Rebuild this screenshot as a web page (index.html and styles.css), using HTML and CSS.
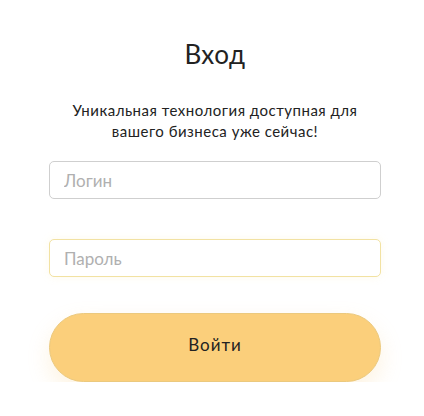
FILE: index.html
```html
<!DOCTYPE html>
<html lang="ru">
<head>
<meta charset="utf-8">
<link rel="stylesheet" href="styles.css">
</head>
<body>
<main class="login">
  <h1 class="title">Вход</h1>
  <p class="subtitle">Уникальная технология доступная для вашего бизнеса уже сейчас!</p>
  <form class="form">
    <input class="field" type="text" placeholder="Логин">
    <input class="field field-focus" type="password" placeholder="Пароль">
    <button class="submit" type="button">Войти</button>
  </form>
</main>
</body>
</html>
```
FILE: styles.css
```css
html, body {
  margin: 0;
  padding: 0;
  background: #fff;
}
body {
  font-family: Lato, "Noto Sans", sans-serif;
  color: #222;
}
.login {
  width: 332px;
  margin: 0 0 0 49px;
  padding-top: 36px;
  display: flex;
  flex-direction: column;
  align-items: stretch;
}
.title {
  margin: 0;
  font-size: 26px;
  font-weight: 400;
  line-height: 36px;
  text-align: center;
  letter-spacing: 0.5px;
  color: #222;
}
.subtitle {
  margin: 28px 0 0;
  font-size: 15px;
  line-height: 21px;
  text-align: center;
  letter-spacing: 0.5px;
  color: #222;
}
.form {
  margin-top: 19px;
  display: flex;
  flex-direction: column;
}
.field {
  box-sizing: border-box;
  height: 38px;
  width: 100%;
  border: 1px solid #cfcfcf;
  border-radius: 5px;
  padding: 0 14px;
  font-family: Lato, "Noto Sans", sans-serif;
  font-size: 17px;
  color: #222;
  outline: none;
  background: #fff;
}
.field::placeholder {
  color: #b0b0b0;
}
.field + .field {
  margin-top: 40px;
}
.field-focus {
  border-color: #f2e2a2;
  box-shadow: 0 0 8px rgba(250, 225, 150, 0.18);
}
.submit {
  box-sizing: border-box;
  margin-top: 36px;
  height: 69px;
  width: 100%;
  padding: 0 0 6px;
  border: 1px solid #ebc97e;
  border-radius: 35px;
  background: #fbcf7b;
  font-family: Lato, "Noto Sans", sans-serif;
  font-size: 17px;
  letter-spacing: 1px;
  color: #222;
  box-shadow: 0 10px 22px rgba(245, 200, 120, 0.22);
  cursor: pointer;
}
```
